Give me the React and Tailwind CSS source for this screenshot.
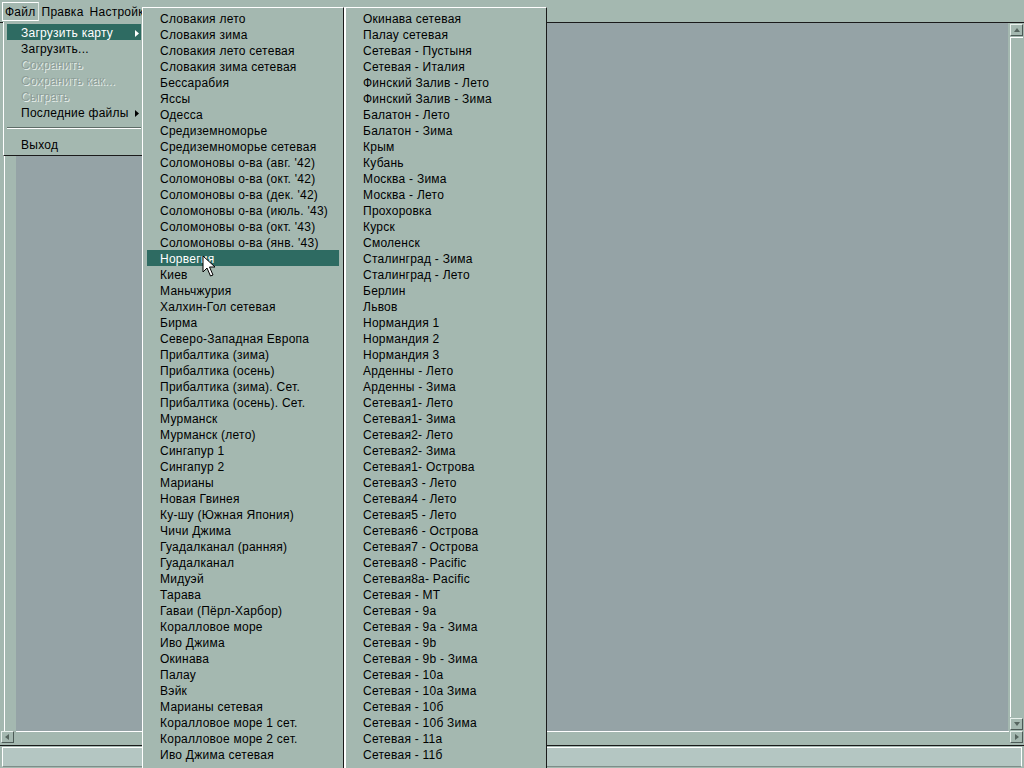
import React from "react";

const mapsA = [
  "Словакия лето",
  "Словакия зима",
  "Словакия лето сетевая",
  "Словакия зима сетевая",
  "Бессарабия",
  "Яссы",
  "Одесса",
  "Средиземноморье",
  "Средиземноморье сетевая",
  "Соломоновы о-ва (авг. '42)",
  "Соломоновы о-ва (окт. '42)",
  "Соломоновы о-ва (дек. '42)",
  "Соломоновы о-ва (июль. '43)",
  "Соломоновы о-ва (окт. '43)",
  "Соломоновы о-ва (янв. '43)",
  "Норвегия",
  "Киев",
  "Маньчжурия",
  "Халхин-Гол сетевая",
  "Бирма",
  "Северо-Западная Европа",
  "Прибалтика (зима)",
  "Прибалтика (осень)",
  "Прибалтика (зима). Сет.",
  "Прибалтика (осень). Сет.",
  "Мурманск",
  "Мурманск (лето)",
  "Сингапур 1",
  "Сингапур 2",
  "Марианы",
  "Новая Гвинея",
  "Ку-шу (Южная Япония)",
  "Чичи Джима",
  "Гуадалканал (ранняя)",
  "Гуадалканал",
  "Мидуэй",
  "Тарава",
  "Гаваи (Пёрл-Харбор)",
  "Коралловое море",
  "Иво Джима",
  "Окинава",
  "Палау",
  "Вэйк",
  "Марианы сетевая",
  "Коралловое море 1 сет.",
  "Коралловое море 2 сет.",
  "Иво Джима сетевая",
];

const mapsB = [
  "Окинава сетевая",
  "Палау сетевая",
  "Сетевая - Пустыня",
  "Сетевая - Италия",
  "Финский Залив - Лето",
  "Финский Залив - Зима",
  "Балатон - Лето",
  "Балатон - Зима",
  "Крым",
  "Кубань",
  "Москва - Зима",
  "Москва - Лето",
  "Прохоровка",
  "Курск",
  "Смоленск",
  "Сталинград - Зима",
  "Сталинград - Лето",
  "Берлин",
  "Львов",
  "Нормандия 1",
  "Нормандия 2",
  "Нормандия 3",
  "Арденны - Лето",
  "Арденны - Зима",
  "Сетевая1- Лето",
  "Сетевая1- Зима",
  "Сетевая2- Лето",
  "Сетевая2- Зима",
  "Сетевая1- Острова",
  "Сетевая3 - Лето",
  "Сетевая4 - Лето",
  "Сетевая5 - Лето",
  "Сетевая6 - Острова",
  "Сетевая7 - Острова",
  "Сетевая8 - Pacific",
  "Сетевая8а- Pacific",
  "Сетевая - МТ",
  "Сетевая - 9а",
  "Сетевая - 9а - Зима",
  "Сетевая - 9b",
  "Сетевая - 9b - Зима",
  "Сетевая - 10а",
  "Сетевая - 10а Зима",
  "Сетевая - 10б",
  "Сетевая - 10б Зима",
  "Сетевая - 11а",
  "Сетевая - 11б",
];

function Arrow({ white }) {
  return (
    <svg width="4" height="7" viewBox="0 0 4 7">
      <polygon points="0,0 4,3.5 0,7" fill={white ? "#ffffff" : "#000000"} />
    </svg>
  );
}

function Row({ label, active, disabled, arrow, indent }) {
  let tone = "text-black";
  if (active) tone = "bg-[#2e6b62] text-white";
  if (disabled) tone = "text-[#8d9e98] [text-shadow:1px_1px_0_#e4ece8]";
  return (
    <div
      className={`h-[16px] flex items-center justify-between pr-[2px] pt-[2px] leading-[14px] whitespace-nowrap ${indent} ${tone}`}
    >
      <span>{label}</span>
      {arrow && <Arrow white={active} />}
    </div>
  );
}

function ScrollBtn({ dir }) {
  const pts = {
    up: "1,6 4,2 7,6",
    down: "1,2 4,6 7,2",
    left: "5,1 1,4 5,7",
    right: "2,1 6,4 2,7",
  }[dir];
  return (
    <div className="w-[13px] h-[12px] flex items-center justify-center bg-[#a4b8b0] border-t border-l border-[#e8f0ec] border-r border-b border-r-[#4c5a56] border-b-[#4c5a56]">
      <svg width="8" height="8" viewBox="0 0 8 8">
        <polygon points={pts} fill="#56655f" />
      </svg>
    </div>
  );
}

function SubMenu({ items, active, className }) {
  return (
    <div
      className={`absolute top-[7px] h-[775px] bg-[#a4b8b0] border-t border-t-white border-r border-r-[#1a1a1a] px-[4px] pt-[2px] ${className}`}
    >
      {items.map((m) => (
        <Row key={m} label={m} active={m === active} indent="pl-[13px]" />
      ))}
    </div>
  );
}

export default function App() {
  return (
    <div className="relative w-[1024px] h-[768px] overflow-hidden bg-[#a4b8b0] text-[12px] tracking-[0.25px] font-['Liberation_Sans',Arial,sans-serif] text-black select-none">
      <div className="flex flex-col h-full">
        {/* menu bar */}
        <div className="h-[22px] flex items-start pt-[2px] pl-[2px]">
          <div className="h-[19px] px-[2px] pt-[1px] flex items-center border border-white border-r-[#dfe8e4]">
            Файл
          </div>
          <div className="h-[19px] px-[2px] pt-[1px] flex items-center border border-transparent">Правка</div>
          <div className="h-[19px] px-[2px] pt-[1px] flex items-center border border-transparent">Настройки</div>
        </div>

        {/* work area */}
        <div className="flex-1 flex border-t border-[#1a1a1a]">
          <div className="w-[16px] flex">
            <div className="w-[4px]" />
            <div className="w-[1px] bg-white" />
          </div>
          <div className="flex-1 bg-[#95a3a6]" />
          <div className="w-[16px] flex flex-col items-start pl-[2px] pt-[1px] pb-[1px] gap-[1px]">
            <ScrollBtn dir="up" />
            <div className="flex-1 w-[13px] border-t border-l border-white" />
            <ScrollBtn dir="down" />
          </div>
        </div>

        {/* horizontal scrollbar */}
        <div className="h-[14px] flex items-start pl-[1px]">
          <ScrollBtn dir="left" />
          <div className="flex-1 h-[13px] ml-[2px] mr-[1px] border-t border-white" />
          <div className="mr-[1px]">
            <ScrollBtn dir="right" />
          </div>
        </div>

        {/* status bar */}
        <div className="h-[23px] border-t border-[#1a1a1a] pt-[1px] px-[2px] pb-[1px]">
          <div className="h-full bg-[#b4c6c2] border-t border-l border-r border-white border-b border-b-[#7d8e89]" />
        </div>
      </div>

      {/* File dropdown */}
      <div className="absolute left-[3px] top-[22px] w-[141px] bg-[#a4b8b0] border-l border-l-white border-b border-b-[#1a1a1a] px-[3px] pt-[2px] pb-[3px]">
        <Row label="Загрузить карту" active arrow indent="pl-[14px]" />
        <Row label="Загрузить..." indent="pl-[14px]" />
        <Row label="Сохранить" disabled indent="pl-[14px]" />
        <Row label="Сохранить как..." disabled indent="pl-[14px]" />
        <Row label="Сыграть" disabled indent="pl-[14px]" />
        <Row label="Последние файлы" arrow indent="pl-[14px]" />
        <div className="h-[16px] flex items-center">
          <div className="w-full border-t border-[#5d6c67] border-b border-b-white" />
        </div>
        <Row label="Выход" indent="pl-[14px]" />
      </div>

      {/* map submenus */}
      <SubMenu items={mapsA} active="Норвегия" className="left-[142px] w-[202px] border-l border-l-white" />
      <SubMenu items={mapsB} className="left-[344px] w-[203px] border-l-2 border-l-white" />

      {/* mouse pointer */}
      <svg
        className="absolute left-[202px] top-[255px]"
        width="15"
        height="23"
        viewBox="0 0 15 23"
      >
        <path
          d="M1 1 L1 17 L5 13 L8.5 21 L11 20 L7.5 12 L13 12 Z"
          fill="#ffffff"
          stroke="#000000"
          strokeWidth="1"
          strokeLinejoin="miter"
        />
      </svg>
    </div>
  );
}
